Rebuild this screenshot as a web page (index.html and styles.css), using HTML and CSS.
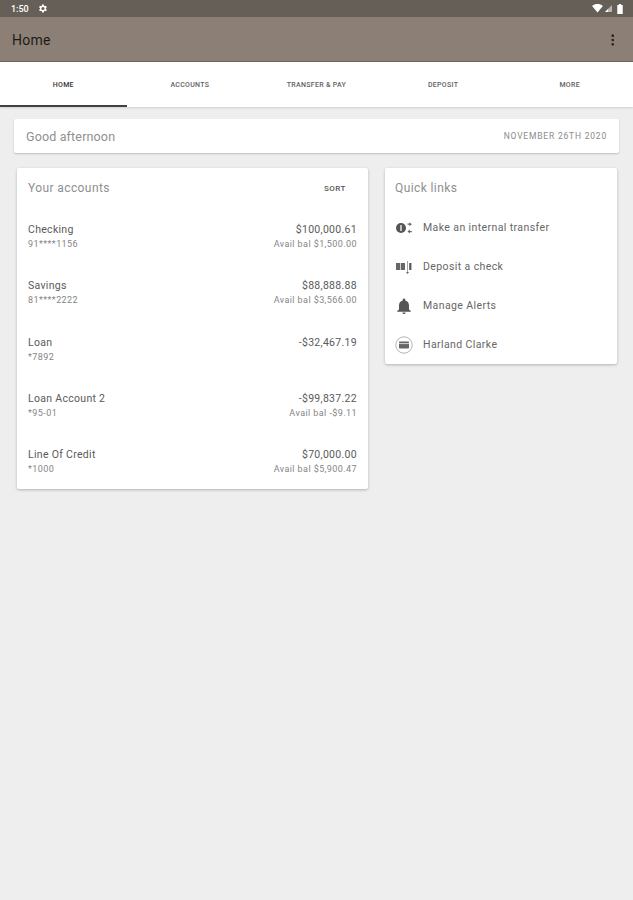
FILE: index.html
```html
<!DOCTYPE html>
<html lang="en">
<head>
<meta charset="utf-8">
<title>Home</title>
<link rel="stylesheet" href="styles.css">
</head>
<body>
<header class="status">
  <div class="status-left">
    <span class="time">1:50</span>
    <svg class="gear" viewBox="0 0 24 24" width="11" height="11"><path fill="#fff" d="M19.4 13a7.500 7.500 0 0 0 0-2l2.100-1.600-2-3.500-2.500 1a7.500 7.500 0 0 0-1.700-1L15 3.200h-4l-.4 2.700a7.500 7.500 0 0 0-1.700 1l-2.500-1-2 3.500L6.600 11a7.500 7.500 0 0 0 0 2l-2.100 1.600 2 3.500 2.500-1a7.500 7.500 0 0 0 1.700 1l.3 2.700h4l.4-2.700a7.500 7.500 0 0 0 1.700-1l2.500 1 2-3.500zM13 15.500a3.500 3.500 0 1 1 0-7 3.500 3.500 0 0 1 0 7z"/></svg>
  </div>
  <div class="status-right">
    <svg viewBox="0 0 12 10" width="11" height="9"><path fill="#fff" d="M0 2.200C3.500-.7 8.500-.7 12 2.200L6 9.500z"/></svg>
    <svg class="signal" viewBox="0 0 9 9" width="7" height="7"><path fill="#b9b5ae" d="M0 9 9 0v9z"/><path fill="#fff" d="M0 9l4-4v4z"/></svg>
    <svg viewBox="0 0 6 11" width="6" height="10"><path fill="#fff" d="M1.800 0h2.400v1H6v10H0V1h1.800z"/></svg>
  </div>
</header>
<div class="appbar">
  <h1 class="appbar-title">Home</h1>
  <svg class="kebab" viewBox="0 0 4 14" width="3.500" height="12"><circle cx="2" cy="2" r="1.600"/><circle cx="2" cy="7" r="1.600"/><circle cx="2" cy="12" r="1.600"/></svg>
</div>
<nav class="tabs">
  <a class="tab tab-active">HOME</a>
  <a class="tab">ACCOUNTS</a>
  <a class="tab">TRANSFER &amp; PAY</a>
  <a class="tab">DEPOSIT</a>
  <a class="tab">MORE</a>
</nav>
<main class="content">
  <section class="greeting">
    <span class="greeting-text">Good afternoon</span>
    <span class="greeting-date">NOVEMBER 26TH 2020</span>
  </section>
  <div class="columns">
    <section class="card accounts">
      <div class="card-head">
        <h2 class="card-title">Your accounts</h2>
        <span class="sort">SORT</span>
      </div>
      <div class="account">
        <div class="acct-col"><span class="acct-name">Checking</span><span class="acct-sub">91****1156</span></div>
        <div class="acct-col acct-right"><span class="acct-name">$100,000.61</span><span class="acct-sub">Avail bal $1,500.00</span></div>
      </div>
      <div class="account">
        <div class="acct-col"><span class="acct-name">Savings</span><span class="acct-sub">81****2222</span></div>
        <div class="acct-col acct-right"><span class="acct-name">$88,888.88</span><span class="acct-sub">Avail bal $3,566.00</span></div>
      </div>
      <div class="account">
        <div class="acct-col"><span class="acct-name">Loan</span><span class="acct-sub">*7892</span></div>
        <div class="acct-col acct-right"><span class="acct-name">-$32,467.19</span></div>
      </div>
      <div class="account">
        <div class="acct-col"><span class="acct-name">Loan Account 2</span><span class="acct-sub">*95-01</span></div>
        <div class="acct-col acct-right"><span class="acct-name">-$99,837.22</span><span class="acct-sub">Avail bal -$9.11</span></div>
      </div>
      <div class="account">
        <div class="acct-col"><span class="acct-name">Line Of Credit</span><span class="acct-sub">*1000</span></div>
        <div class="acct-col acct-right"><span class="acct-name">$70,000.00</span><span class="acct-sub">Avail bal $5,900.47</span></div>
      </div>
    </section>
    <section class="card links">
      <h2 class="card-title links-title">Quick links</h2>
      <div class="link">
        <svg class="icon" viewBox="0 0 18 18" width="18" height="18"><circle cx="6" cy="9" r="5" fill="#555"/><rect x="5.200" y="6" width="1.600" height="6" fill="#ddd"/><path fill="#666" d="M12.500 4.600h2V3.200l2.300 2-2.300 2V5.800h-2zM16.800 12h-2v-1.400l-2.300 2 2.300 2v-1.400h2z"/></svg>
        <span>Make an internal transfer</span>
      </div>
      <div class="link">
        <svg class="icon" viewBox="0 0 18 18" width="18" height="18"><rect x="1" y="5" width="4.300" height="7" fill="#666"/><rect x="6" y="5" width="4" height="7" fill="#666"/><rect x="12" y="3" width=".9" height="11" fill="#999"/><rect x="14.200" y="5" width="2.200" height="7" fill="#555"/><path fill="#666" d="M11 14h3l-1.500 2z"/></svg>
        <span>Deposit a check</span>
      </div>
      <div class="link">
        <svg class="icon" viewBox="0 0 18 18" width="18" height="18"><path fill="#555" d="M9 17a1.600 1.600 0 0 0 1.600-1.600H7.400A1.600 1.600 0 0 0 9 17zM14 12.500V8.500c0-2.500-1.300-4.500-3.700-5V2.800a1.300 1.300 0 0 0-2.600 0v.7C5.300 4 4 6 4 8.500v4l-1.800 1.600v.6h13.600v-.6z"/></svg>
        <span>Manage Alerts</span>
      </div>
      <div class="link">
        <svg class="icon" viewBox="0 0 18 18" width="18" height="18"><circle cx="9" cy="9" r="8.200" fill="none" stroke="#aaa" stroke-width=".9"/><rect x="4" y="5.500" width="10" height="7" rx=".8" fill="#666"/><rect x="4" y="7" width="10" height="1.100" fill="#ccc"/></svg>
        <span>Harland Clarke</span>
      </div>
    </section>
  </div>
</main>
</body>
</html>
```
FILE: styles.css
```css
* { box-sizing: border-box; }
html, body { margin: 0; padding: 0; }
body {
  width: 633px;
  height: 900px;
  overflow: hidden;
  background: #eeeeee;
  font-family: Roboto, "Liberation Sans", sans-serif;
  color: #555;
}
.status {
  height: 17px;
  background: #665f57;
  display: flex;
  align-items: center;
  justify-content: space-between;
  padding: 0 10px 0 11px;
  color: #fff;
}
.status-left, .status-right { display: flex; align-items: center; }
.status-left { gap: 8px; }
.status-right { gap: 2px; }
.signal { margin-right: 3px; }
.time { font-size: 9px; font-weight: 500; }
.appbar {
  height: 45px;
  background: #8c8076;
  display: flex;
  align-items: center;
  justify-content: space-between;
  padding: 2px 19px 0 12px;
  border-bottom: 1px solid #6f675e;
}
.appbar-title { margin: 0; font-size: 14px; font-weight: 400; letter-spacing: .25px; color: #1c1a18; }
.kebab { fill: #2a2825; }
.tabs {
  height: 45px;
  background: #fff;
  display: grid;
  grid-template-columns: repeat(5, 1fr);
  box-shadow: 0 1px 2px rgba(0,0,0,.12);
}
.tab {
  display: flex;
  align-items: center;
  justify-content: center;
  font-size: 7px;
  font-weight: 500;
  letter-spacing: .3px;
  color: #606060;
}
.tab-active { color: #333; box-shadow: inset 0 -2px 0 #45413c; }
.content { padding: 12px 14px 0 14px; }
.greeting {
  height: 34px;
  background: #fff;
  border-radius: 2px;
  box-shadow: 0 1px 2px rgba(0,0,0,.2);
  display: flex;
  align-items: center;
  justify-content: space-between;
  padding: 0 12px;
}
.greeting-text { font-size: 12.500px; color: #8f8f8f; letter-spacing: .15px; }
.greeting-date { font-size: 8.500px; color: #8a8a8a; letter-spacing: .8px; }
.columns {
  display: flex;
  align-items: flex-start;
  gap: 17px;
  margin: 15px 2px 0 3px;
}
.card {
  background: #fff;
  border-radius: 2px;
  box-shadow: 0 1px 3px rgba(0,0,0,.25);
}
.accounts { width: 351px; padding: 0 11px; height: 321px; }
.links { width: 232px; height: 196px; padding: 0 10px; }
.card-head {
  display: flex;
  justify-content: space-between;
  align-items: center;
  height: 40px;
}
.card-title { margin: 0; font-size: 12px; font-weight: 400; color: #8f8f8f; letter-spacing: .4px; }
.links-title { height: 40px; line-height: 40px; }
.sort { font-size: 8px; font-weight: 500; color: #555; letter-spacing: .5px; margin-right: 11px; }
.account {
  height: 56.300px;
  display: flex;
  justify-content: space-between;
  padding-top: 15px;
}
.acct-col { display: flex; flex-direction: column; gap: 2px; }
.acct-right { align-items: flex-end; }
.acct-name { font-size: 10.500px; line-height: 13px; color: #5a5a5a; letter-spacing: .3px; }
.acct-sub { font-size: 9px; line-height: 12px; color: #858585; letter-spacing: .42px; }
.link {
  height: 39px;
  display: flex;
  align-items: center;
  gap: 10px;
  font-size: 10.500px;
  color: #666;
  letter-spacing: .4px;
}
.icon { flex: none; }
```
